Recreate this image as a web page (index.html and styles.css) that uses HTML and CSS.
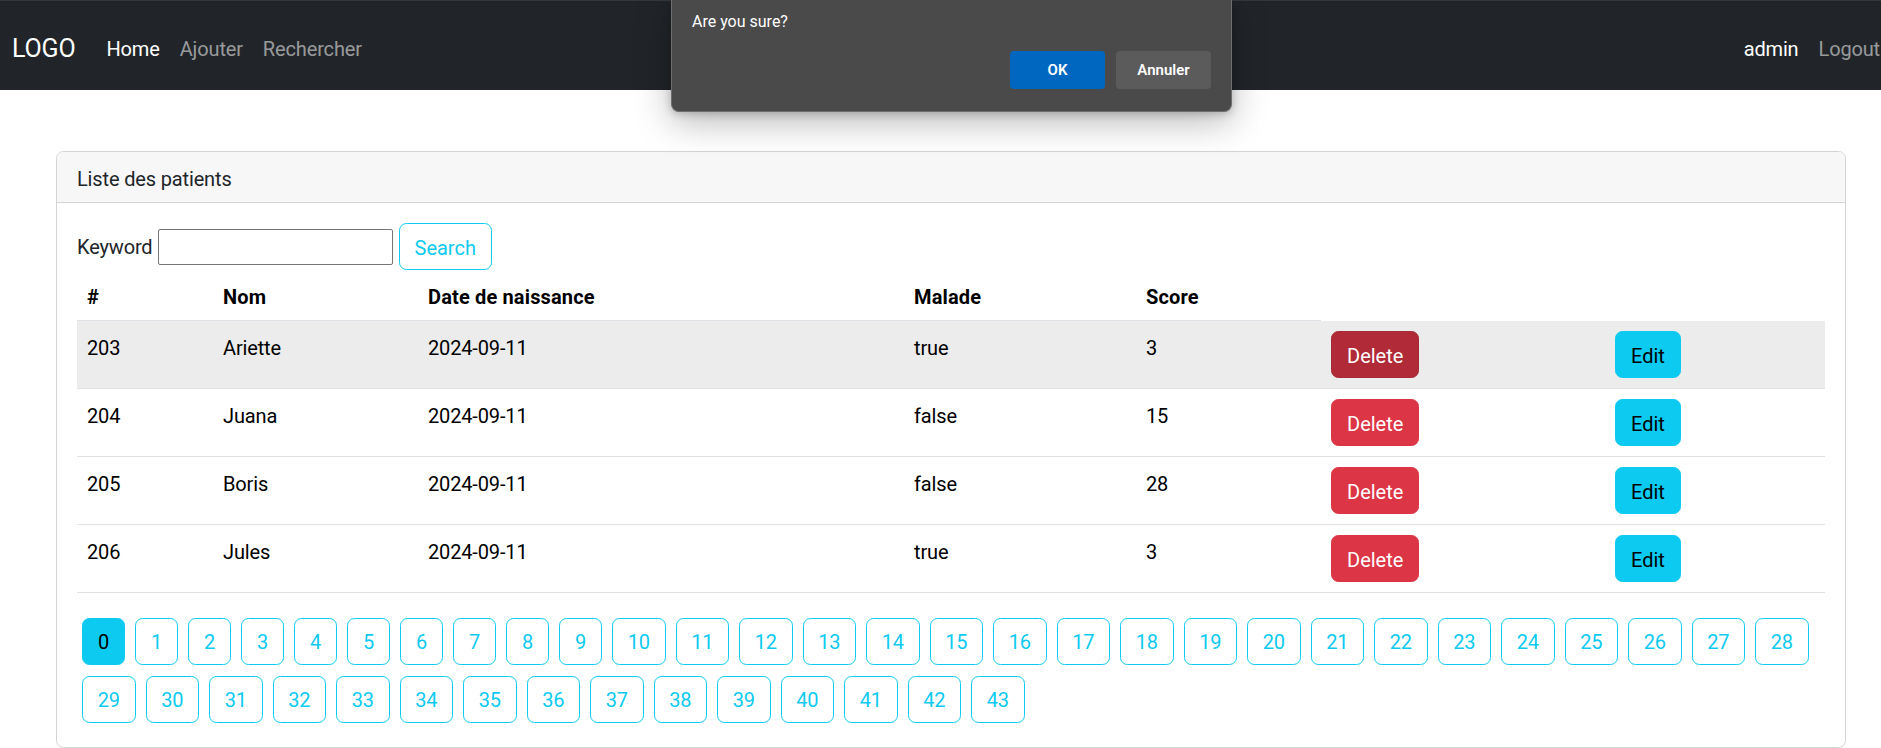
FILE: index.html
```html
<!DOCTYPE html>
<html lang="fr">
<head>
<meta charset="utf-8">
<title>Patients</title>
<link rel="stylesheet" href="styles.css">
</head>
<body>
<div class="page">
  <nav class="navbar">
    <div class="nav-left">
      <a class="brand" href="#">LOGO</a>
      <ul class="nav-links">
        <li><a class="nav-link active" href="#">Home</a></li>
        <li><a class="nav-link" href="#">Ajouter</a></li>
        <li><a class="nav-link" href="#">Rechercher</a></li>
      </ul>
    </div>
    <ul class="nav-links">
      <li><a class="nav-link active" href="#">admin</a></li>
      <li><a class="nav-link" href="#">Logout</a></li>
    </ul>
  </nav>

  <main class="container">
    <div class="card">
      <div class="card-header">Liste des patients</div>
      <div class="card-body">
        <form class="search-form">
          <label class="search-label">Keyword</label>
          <input class="search-input" type="text">
          <button class="btn btn-outline-info" type="button">Search</button>
        </form>
        <table class="table">
          <colgroup>
            <col class="c-id"><col class="c-nom"><col class="c-date"><col class="c-malade"><col class="c-score"><col class="c-del"><col class="c-edit">
          </colgroup>
          <thead>
            <tr><th>#</th><th>Nom</th><th>Date de naissance</th><th>Malade</th><th>Score</th></tr>
          </thead>
          <tbody>
            <tr class="hover">
              <td>203</td><td>Ariette</td><td>2024-09-11</td><td>true</td><td>3</td>
              <td class="act"><button class="btn btn-danger active" type="button">Delete</button></td>
              <td class="act"><button class="btn btn-info" type="button">Edit</button></td>
            </tr>
            <tr>
              <td>204</td><td>Juana</td><td>2024-09-11</td><td>false</td><td>15</td>
              <td class="act"><button class="btn btn-danger" type="button">Delete</button></td>
              <td class="act"><button class="btn btn-info" type="button">Edit</button></td>
            </tr>
            <tr>
              <td>205</td><td>Boris</td><td>2024-09-11</td><td>false</td><td>28</td>
              <td class="act"><button class="btn btn-danger" type="button">Delete</button></td>
              <td class="act"><button class="btn btn-info" type="button">Edit</button></td>
            </tr>
            <tr>
              <td>206</td><td>Jules</td><td>2024-09-11</td><td>true</td><td>3</td>
              <td class="act"><button class="btn btn-danger" type="button">Delete</button></td>
              <td class="act"><button class="btn btn-info" type="button">Edit</button></td>
            </tr>
          </tbody>
        </table>
        <ul class="pages">
          <li><a class="pg current" href="#">0</a></li>
          <li><a class="pg" href="#">1</a></li>
          <li><a class="pg" href="#">2</a></li>
          <li><a class="pg" href="#">3</a></li>
          <li><a class="pg" href="#">4</a></li>
          <li><a class="pg" href="#">5</a></li>
          <li><a class="pg" href="#">6</a></li>
          <li><a class="pg" href="#">7</a></li>
          <li><a class="pg" href="#">8</a></li>
          <li><a class="pg" href="#">9</a></li>
          <li><a class="pg wide" href="#">10</a></li>
          <li><a class="pg wide" href="#">11</a></li>
          <li><a class="pg wide" href="#">12</a></li>
          <li><a class="pg wide" href="#">13</a></li>
          <li><a class="pg wide" href="#">14</a></li>
          <li><a class="pg wide" href="#">15</a></li>
          <li><a class="pg wide" href="#">16</a></li>
          <li><a class="pg wide" href="#">17</a></li>
          <li><a class="pg wide" href="#">18</a></li>
          <li><a class="pg wide" href="#">19</a></li>
          <li><a class="pg wide" href="#">20</a></li>
          <li><a class="pg wide" href="#">21</a></li>
          <li><a class="pg wide" href="#">22</a></li>
          <li><a class="pg wide" href="#">23</a></li>
          <li><a class="pg wide" href="#">24</a></li>
          <li><a class="pg wide" href="#">25</a></li>
          <li><a class="pg wide" href="#">26</a></li>
          <li><a class="pg wide" href="#">27</a></li>
          <li><a class="pg wide" href="#">28</a></li>
          <li><a class="pg wide" href="#">29</a></li>
          <li><a class="pg wide" href="#">30</a></li>
          <li><a class="pg wide" href="#">31</a></li>
          <li><a class="pg wide" href="#">32</a></li>
          <li><a class="pg wide" href="#">33</a></li>
          <li><a class="pg wide" href="#">34</a></li>
          <li><a class="pg wide" href="#">35</a></li>
          <li><a class="pg wide" href="#">36</a></li>
          <li><a class="pg wide" href="#">37</a></li>
          <li><a class="pg wide" href="#">38</a></li>
          <li><a class="pg wide" href="#">39</a></li>
          <li><a class="pg wide" href="#">40</a></li>
          <li><a class="pg wide" href="#">41</a></li>
          <li><a class="pg wide" href="#">42</a></li>
          <li><a class="pg wide" href="#">43</a></li>
        </ul>
      </div>
    </div>
  </main>

  <div class="dialog" role="dialog">
    <p class="dialog-msg">Are you sure?</p>
    <div class="dialog-actions">
      <button class="dlg-btn dlg-ok" type="button">OK</button>
      <button class="dlg-btn dlg-cancel" type="button">Annuler</button>
    </div>
  </div>
</div>
</body>
</html>
```

FILE: styles.css
```css
html, body {
  margin: 0;
  padding: 0;
  overflow: hidden;
  background: #fff;
}

body {
  font-family: "Segoe UI", Roboto, "Noto Sans", sans-serif;
  font-size: 20px;
  line-height: 30px;
  letter-spacing: -0.15px;
  color: #212529;
}

.page {
  position: relative;
  width: 1902px;
  height: 748px;
}

/* ---------- navbar ---------- */
.navbar {
  box-sizing: border-box;
  height: 90px;
  padding: 6px 12px 0 12px;
  background: #212529;
  border-top: 1px solid #34383c;
  display: flex;
  align-items: center;
  justify-content: space-between;
}

.nav-left {
  display: flex;
  align-items: center;
}

.brand {
  font-size: 25px;
  line-height: 37px;
  color: #fff;
  text-decoration: none;
  margin-right: 21px;
}

.nav-links {
  list-style: none;
  margin: 0;
  padding: 0;
  display: flex;
}

.nav-link {
  display: block;
  padding: 0 10px;
  color: rgba(255, 255, 255, 0.55);
  text-decoration: none;
}

.nav-link.active {
  color: #fff;
}

/* ---------- layout ---------- */
.container {
  padding: 61px 56px 0 56px;
}

.card {
  border: 1px solid #d3d4d5;
  border-radius: 7.5px;
  background: #fff;
  overflow: hidden;
}

.card-header {
  padding: 12px 20px 8px 20px;
  background: #f7f7f7;
  border-bottom: 1px solid #d3d4d5;
}

.card-body {
  padding: 20px 20px 20px 20px;
}

/* ---------- search ---------- */
.search-form {
  display: flex;
  align-items: center;
  margin: 0;
}

.search-label {
  margin-right: 5px;
  padding-top: 1px;
}

.search-input {
  box-sizing: border-box;
  width: 235px;
  height: 36px;
  border: 1px solid #767676;
  border-radius: 2px;
  margin: 0 6px 0 0;
  padding: 1px 2px;
  font: inherit;
  font-size: 16px;
}

/* ---------- buttons ---------- */
.btn {
  display: inline-block;
  box-sizing: border-box;
  font: inherit;
  font-size: 20px;
  line-height: 30px;
  padding: 9px 15px 6px 15px;
  border: 1px solid transparent;
  border-radius: 7.5px;
  background: transparent;
  cursor: pointer;
}

.btn-outline-info {
  color: #0dcaf0;
  border-color: #0dcaf0;
}

.btn-danger {
  color: #fff;
  background: #dc3545;
  border-color: #dc3545;
}

.btn-danger.active {
  background: #b02a37;
  border-color: #a52834;
}

.btn-info {
  color: #000;
  background: #0dcaf0;
  border-color: #0dcaf0;
}

/* ---------- table ---------- */
.table {
  width: 1748px;
  border-collapse: collapse;
  table-layout: fixed;
  margin: 0;
}

.c-id { width: 136px; }
.c-nom { width: 205px; }
.c-date { width: 486px; }
.c-malade { width: 232px; }
.c-score { width: 185px; }
.c-del { width: 284px; }
.c-edit { width: 220px; }

.table th,
.table td {
  padding: 12px 10px 8px 10px;
  text-align: left;
  vertical-align: top;
  border-bottom: 1px solid #dee2e6;
}

.table td.act {
  padding: 10px;
}

.table th {
  font-weight: 700;
  letter-spacing: 0.15px;
  color: #000;
}

.table td {
  color: #000;
}

.table tr.hover td {
  background: #ececec;
}

/* ---------- pagination ---------- */
.pages {
  list-style: none;
  margin: 25px 0 4px 0;
  padding: 0 0 0 5px;
  display: flex;
  flex-wrap: wrap;
  column-gap: 10px;
  row-gap: 11px;
}

.pg {
  display: block;
  box-sizing: border-box;
  width: 43px;
  height: 47px;
  line-height: 47px;
  text-align: center;
  color: #0dcaf0;
  border: 1px solid #0dcaf0;
  border-radius: 7.5px;
  text-decoration: none;
}

.pg.wide {
  width: 53.5px;
}

.pg.current {
  background: #0dcaf0;
  color: #000;
}

/* ---------- native confirm dialog ---------- */
.dialog {
  position: absolute;
  left: 671px;
  top: -1px;
  box-sizing: border-box;
  width: 561px;
  height: 113px;
  padding: 12px 20px 0 20px;
  background: #4a4a4a;
  border: 1px solid #6e6e6e;
  border-top: none;
  border-radius: 0 0 8px 8px;
  box-shadow: 0 10px 36px rgba(0, 0, 0, 0.28), 0 2px 8px rgba(0, 0, 0, 0.2);
  font-family: "Segoe UI", Roboto, "Noto Sans", sans-serif;
  letter-spacing: 0;
}

.dialog-msg {
  margin: 0;
  font-size: 16px;
  line-height: 22px;
  color: #fff;
}

.dialog-actions {
  display: flex;
  justify-content: flex-end;
  gap: 11px;
  margin-top: 18px;
}

.dlg-btn {
  width: 95px;
  height: 38px;
  border: none;
  border-radius: 4px;
  font-family: inherit;
  font-size: 15px;
  font-weight: 600;
  color: #fff;
}

.dlg-ok {
  background: #0067c0;
}

.dlg-cancel {
  background: #5b5b5b;
}
```
